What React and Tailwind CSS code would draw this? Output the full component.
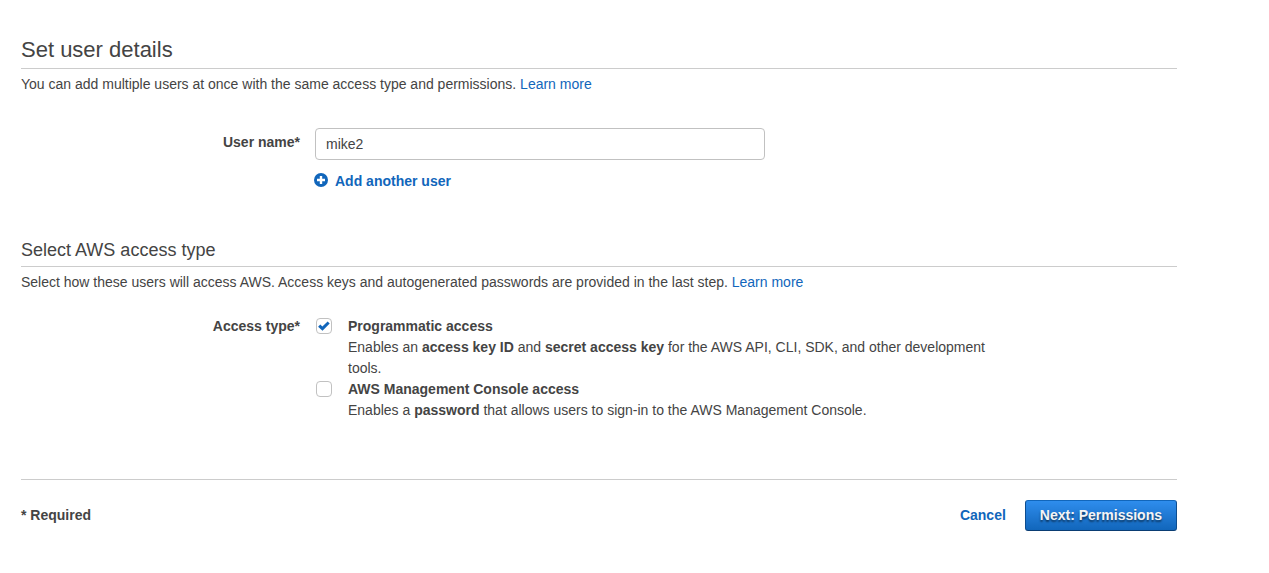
import React, { useState } from "react";

function Check({ id, checked, onChange }) {
  return (
    <span className="relative mt-[2px] block size-4">
      <input
        id={id}
        type="checkbox"
        checked={checked}
        onChange={onChange}
        className="block size-4 appearance-none rounded-[4px] border border-[#c1c1c1] bg-white"
      />
      {checked && (
        <svg viewBox="0 0 16 16" className="pointer-events-none absolute inset-0 size-4" aria-hidden="true">
          <path d="M2.1 8.7 L4.3 6.6 L6.4 8.5 L11.6 3.6 L13.7 5.6 L6.5 12.8 Z" fill="#1166bb" />
        </svg>
      )}
    </span>
  );
}

function Option({ id, title, checked, onChange, children }) {
  return (
    <div className="flex gap-4">
      <Check id={id} checked={checked} onChange={onChange} />
      <div className="flex-1">
        <label htmlFor={id} className="block font-bold">{title}</label>
        <p>{children}</p>
      </div>
    </div>
  );
}

export default function App() {
  const [name, setName] = useState("mike2");
  const [programmatic, setProgrammatic] = useState(true);
  const [consoleAccess, setConsoleAccess] = useState(false);

  return (
    <main className="bg-white pt-9 pr-[92px] pb-10 pl-[21px] font-['Liberation_Sans',Arial,sans-serif] text-sm leading-[21px] text-[#444]">
      <section>
        <h1 className="border-b border-[#ccc] pb-1 text-[22px] leading-7">Set user details</h1>
        <p className="mt-[5px]">
          You can add multiple users at once with the same access type and permissions.{" "}
          <a href="#users" className="text-[#1166bb]">Learn more</a>
        </p>
        <div className="mt-[33px] flex gap-[15px]">
          <label htmlFor="user-name" className="w-[279px] pt-1 text-right font-bold">User name*</label>
          <div>
            <input
              id="user-name"
              type="text"
              value={name}
              onChange={(e) => setName(e.target.value)}
              className="block h-8 w-[450px] rounded-[4px] border border-[#c1c1c1] px-[10px]"
            />
            <button type="button" className="mt-[11px] -ml-px flex items-start gap-[7px] font-bold text-[#1166bb]">
              <svg viewBox="0 0 14 14" className="mt-[2px] size-[14px]" aria-hidden="true">
                <circle cx="7" cy="7" r="7" fill="#1166bb" />
                <path d="M7 3v8M3 7h8" stroke="#fff" strokeWidth="2.4" />
              </svg>
              Add another user
            </button>
          </div>
        </div>
      </section>

      <section className="mt-[46px]">
        <h2 className="border-b border-[#ccc] pb-1 text-lg leading-6">Select AWS access type</h2>
        <p className="mt-[5px]">
          Select how these users will access AWS. Access keys and autogenerated passwords are provided in the last step.{" "}
          <a href="#access" className="text-[#1166bb]">Learn more</a>
        </p>
        <div role="group" aria-labelledby="access-type" className="mt-[23px] flex gap-4">
          <div id="access-type" className="w-[279px] text-right font-bold">Access type*</div>
          <div className="max-w-[680px] flex-1">
            <Option
              id="programmatic"
              title="Programmatic access"
              checked={programmatic}
              onChange={(e) => setProgrammatic(e.target.checked)}
            >
              Enables an <b>access key ID</b> and <b>secret access key</b> for the AWS API, CLI, SDK, and other development tools.
            </Option>
            <Option
              id="console"
              title="AWS Management Console access"
              checked={consoleAccess}
              onChange={(e) => setConsoleAccess(e.target.checked)}
            >
              Enables a <b>password</b> that allows users to sign-in to the AWS Management Console.
            </Option>
          </div>
        </div>
      </section>

      <footer className="mt-[58px] flex items-center justify-between border-t border-[#ccc] pt-5 font-bold">
        <span>* Required</span>
        <div className="flex items-center gap-[19px]">
          <button type="button" className="text-[#1166bb]">Cancel</button>
          <button
            type="button"
            className="h-[31px] rounded-[3px] border border-t-[#1166bb] border-r-[#0d4d8f] border-b-[#0a3d73] border-l-[#0d4d8f] bg-linear-to-b from-[#2e8ded] to-[#1166bb] px-[14px] text-[#f5f5f5] [text-shadow:0_2px_2px_#0008]"
          >
            Next: Permissions
          </button>
        </div>
      </footer>
    </main>
  );
}
